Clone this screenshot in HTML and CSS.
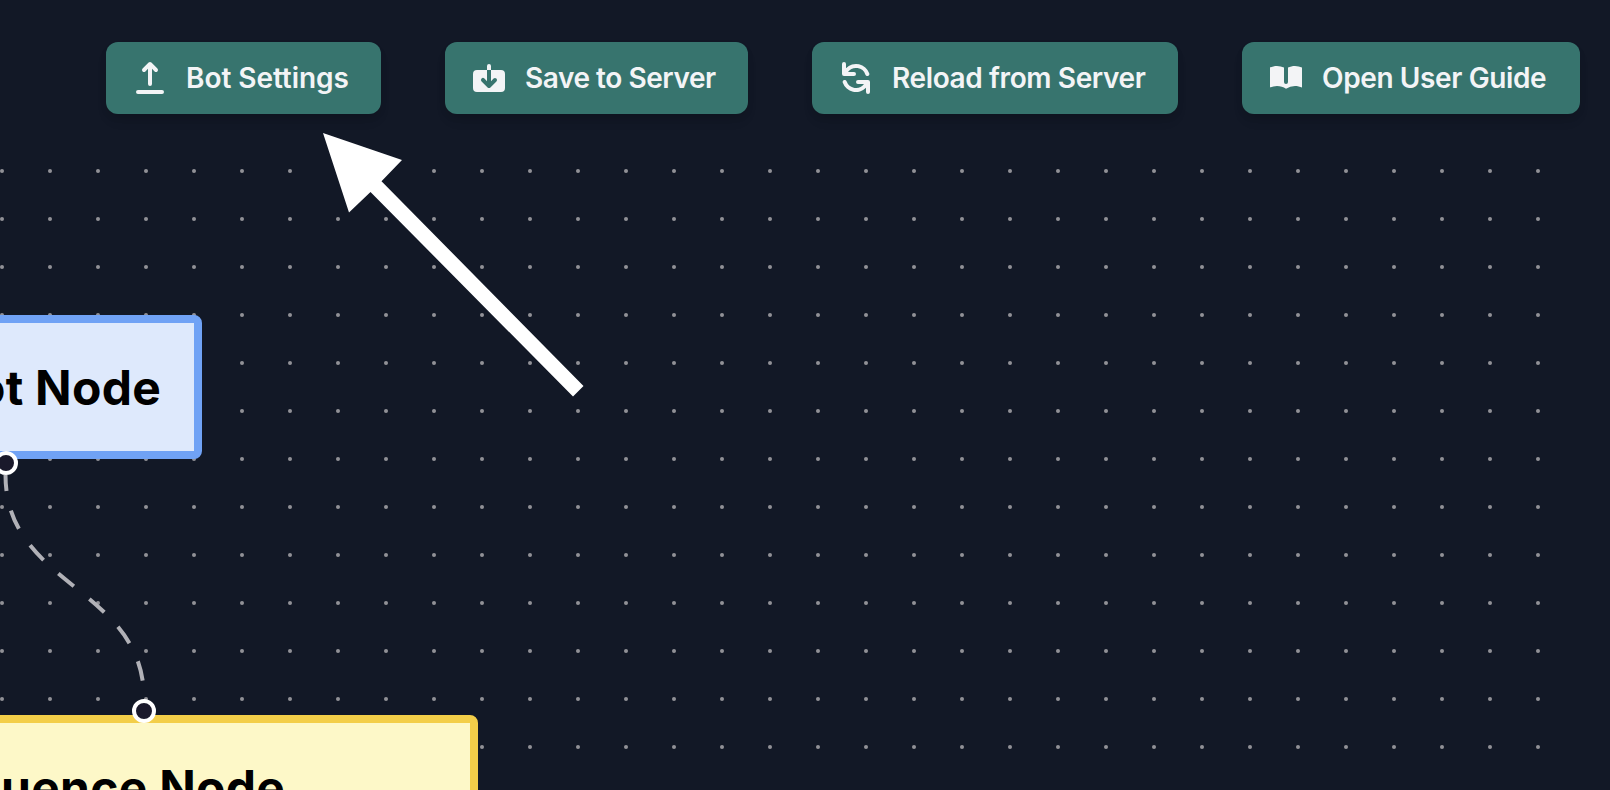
FILE: index.html
```html
<!DOCTYPE html>
<html lang="en">
<head>
<meta charset="utf-8">
<title>Bot Editor</title>
<link rel="stylesheet" href="styles.css">
</head>
<body>
<div class="app">
  <header class="toolbar">
    <button class="btn btn-settings">
      <svg class="icon" viewBox="0 0 20 20"><path fill-rule="evenodd" clip-rule="evenodd" d="M3 17a1 1 0 011-1h12a1 1 0 110 2H4a1 1 0 01-1-1zM6.293 6.707a1 1 0 010-1.414l3-3a1 1 0 011.414 0l3 3a1 1 0 01-1.414 1.414L11 5.414V13a1 1 0 11-2 0V5.414L7.707 6.707a1 1 0 01-1.414 0z"/></svg>
      <span>Bot Settings</span>
    </button>
    <button class="btn btn-save">
      <svg class="icon" viewBox="0 0 20 20"><path d="M7.707 10.293a1 1 0 10-1.414 1.414l3 3a1 1 0 001.414 0l3-3a1 1 0 00-1.414-1.414L11 11.586V6h5a2 2 0 012 2v7a2 2 0 01-2 2H4a2 2 0 01-2-2V8a2 2 0 012-2h5v5.586l-1.293-1.293zM9 4a1 1 0 012 0v2H9V4z"/></svg>
      <span>Save to Server</span>
    </button>
    <button class="btn btn-reload">
      <svg class="icon" viewBox="0 0 20 20"><path fill-rule="evenodd" clip-rule="evenodd" d="M4 2a1 1 0 011 1v2.101a7.002 7.002 0 0111.601 2.566 1 1 0 11-1.885.666A5.002 5.002 0 005.999 7H9a1 1 0 010 2H4a1 1 0 01-1-1V3a1 1 0 011-1zm.008 9.057a1 1 0 011.276.61A5.002 5.002 0 0014.001 13H11a1 1 0 110-2h5a1 1 0 011 1v5a1 1 0 11-2 0v-2.101a7.002 7.002 0 01-11.601-2.566 1 1 0 01.61-1.276z"/></svg>
      <span>Reload from Server</span>
    </button>
    <button class="btn btn-guide">
      <svg class="icon" viewBox="0 0 20 20"><path d="M9 4.804A7.968 7.968 0 005.5 4c-1.255 0-2.443.29-3.5.804v10A7.969 7.969 0 015.5 14c1.669 0 3.218.51 4.5 1.385A7.962 7.962 0 0114.5 14c1.255 0 2.443.29 3.5.804v-10A7.968 7.968 0 0014.5 4c-1.255 0-2.443.29-3.5.804V12a1 1 0 11-2 0V4.804z"/></svg>
      <span>Open User Guide</span>
    </button>
  </header>
  <main class="canvas">
    <svg class="grid" width="1580" height="644">
      <defs>
        <pattern id="dots" x="-22" y="1" width="48" height="48" patternUnits="userSpaceOnUse">
          <circle cx="24" cy="24" r="2"/>
        </pattern>
      </defs>
      <rect width="1580" height="644" fill="url(#dots)"/>
    </svg>
    <svg class="edges" width="1610" height="644" viewBox="0 146 1610 644">
      <path d="M5.5 475C5.5 587 144 587 144 699"/>
    </svg>
    <div class="node node-root">Root Node</div>
    <div class="node node-sequence">Sequence Node</div>
    <span class="handle handle-source"></span>
    <span class="handle handle-target"></span>
  </main>
  <svg class="pointer" width="261" height="264" viewBox="323 133 261 264">
    <path d="M323 133L402 160L381.5 181.2L583.5 386L573 396.5L370.5 192L349 212.5Z"/>
  </svg>
</div>
</body>
</html>
```

FILE: styles.css
```css
body {
  margin: 0;
  background: #121826;
  font-family: Inter, "Liberation Sans", sans-serif;
}

.app {
  position: relative;
  display: flex;
  flex-direction: column;
  height: 790px;
  overflow: hidden;
}

.toolbar {
  display: flex;
  justify-content: flex-end;
  gap: 64px;
  height: 72px;
  padding: 42px 30px 32px;
}

.btn {
  display: flex;
  flex: none;
  align-items: center;
  gap: 16px;
  box-sizing: border-box;
  height: 72px;
  padding: 0 0 0 24px;
  border: 0;
  border-radius: 12px;
  background: #37746e;
  box-shadow: 0 8px 12px -2px rgba(0, 0, 0, 0.1), 0 4px 8px -2px rgba(0, 0, 0, 0.1);
  color: #f3f4f6;
  font: 600 28px/40px Inter, "Liberation Sans", sans-serif;
  white-space: nowrap;
}

.btn-settings { width: 275px; letter-spacing: -0.05px; }
.btn-save { width: 303px; letter-spacing: -0.45px; }
.btn-reload { width: 366px; letter-spacing: -0.38px; }
.btn-guide { width: 338px; letter-spacing: -0.38px; }

.icon {
  flex: none;
  width: 40px;
  height: 40px;
  fill: currentColor;
}

.canvas {
  position: relative;
  flex: 1;
  overflow: hidden;
}

.grid,
.edges {
  position: absolute;
  top: 0;
  left: 0;
}

.grid circle {
  fill: #919197;
}

.edges path {
  fill: none;
  stroke: #b1b1b7;
  stroke-width: 4;
  stroke-dasharray: 20;
  stroke-dashoffset: 4;
}

.node {
  position: absolute;
  box-sizing: border-box;
  height: 144px;
  border: 8px solid;
  border-radius: 8px;
  color: #000;
  font-size: 48px;
  font-weight: 700;
  line-height: 64px;
  letter-spacing: 0.25px;
  text-align: right;
  white-space: nowrap;
}

.node-root {
  top: 169px;
  left: -190px;
  width: 392px;
  padding: 33px 33px 31px 32px;
  border-color: #70a2f5;
  background: #dee9fc;
}

.node-sequence {
  top: 569px;
  left: -190px;
  width: 668px;
  padding: 33px 185px 31px 32px;
  border-color: #f3ce49;
  background: #fdf8c8;
}

.handle {
  position: absolute;
  box-sizing: border-box;
  width: 24px;
  height: 24px;
  border: 4px solid #fff;
  border-radius: 50%;
  background: #1a192b;
}

.handle-source {
  top: 305px;
  left: -6px;
}

.handle-target {
  top: 553px;
  left: 132px;
}

.pointer {
  position: absolute;
  top: 133px;
  left: 323px;
  fill: #fff;
}
```
